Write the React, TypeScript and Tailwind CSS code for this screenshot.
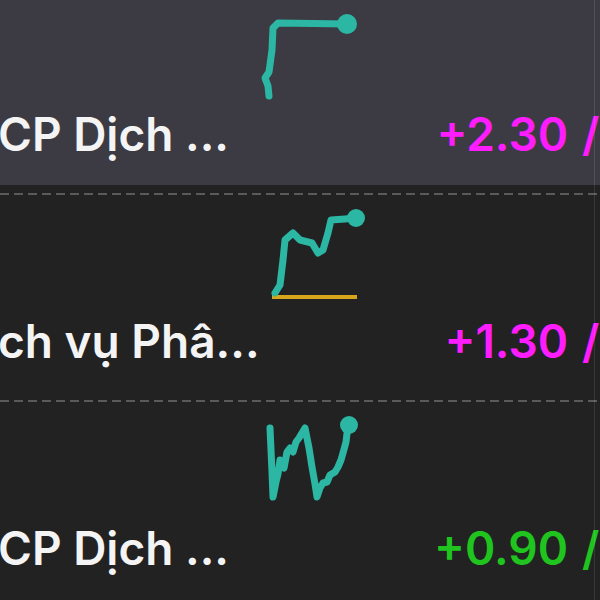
type Row = {
  name: string;
  value: string;
  tail: string;
  valueColor: string;
  active?: boolean;
  line: string;
  dot: [number, number, number];
  base?: [number, number, number];
};

const rows: Row[] = [
  {
    name: 'CP Dịch ...',
    value: '+2.30',
    tail: '/ +3.41%',
    valueColor: 'text-[#ff1cff]',
    active: true,
    line: '9,98 8,88 5,80 9,74 12,52 13,30 18,25 87,26',
    dot: [87, 26, 10],
  },
  {
    name: 'ch vụ Phâ...',
    value: '+1.30',
    tail: '/ +2.10%',
    valueColor: 'text-[#ff1cff]',
    line: '15,88 20,80 23,55 25,35 33,28 40,35 52,38 58,48 63,45 68,28 71,15 85,14 96,13',
    dot: [96, 13, 9],
    base: [12, 97, 92],
  },
  {
    name: 'CP Dịch ...',
    value: '+0.90',
    tail: '/ +1.52%',
    valueColor: 'text-[#1fc41f]',
    line: '10,16 12,60 13,85 16,70 18,62 20,48 24,56 27,40 30,36 33,40 36,30 39,26 45,16 49,36 52,55 55,72 57,85 60,76 63,71 67,70 70,63 75,60 78,55 81,48 83,41 86,30 88,13',
    dot: [89, 13, 9],
  },
];

const Sparkline = ({ row }: { row: Row }) => (
  <svg width="110" height="110" viewBox="0 0 110 110" className="ml-[260px] block overflow-visible">
    {row.base && (
      <line x1={row.base[0]} y1={row.base[2]} x2={row.base[1]} y2={row.base[2]} stroke="#d6a51c" strokeWidth="4" />
    )}
    <polyline
      points={row.line}
      fill="none"
      stroke="#2cb6a4"
      strokeWidth="7"
      strokeLinejoin="round"
      strokeLinecap="round"
    />
    <circle cx={row.dot[0]} cy={row.dot[1]} r={row.dot[2]} fill="#2cb6a4" />
  </svg>
);

export default function App() {
  return (
    <div className="relative h-[600px] w-[600px] overflow-hidden bg-[#222222] font-['Inter','Noto_Sans',sans-serif] text-[#f4f4f4]">
      <div className="-mt-[12px] flex flex-col">
        {rows.map((row, i) => (
          <div key={i} className="flex flex-col">
            <div className={`flex h-[197px] flex-col pt-[10px] ${row.active ? 'bg-[#3c3b43]' : ''}`}>
              <Sparkline row={row} />
              <div className="flex h-[52px] items-center whitespace-nowrap text-[46px] font-semibold leading-[52px]">
                <span className="-ml-[2px] w-[418px] shrink-0">{row.name}</span>
                <span className={`w-[152px] shrink-0 text-right ${row.valueColor}`}>{row.value}</span>
                <span className={`ml-[14px] shrink-0 ${row.valueColor}`}>{row.tail}</span>
              </div>
            </div>
            <div className="h-[8px]" />
            <div className="h-[2px] bg-[repeating-linear-gradient(90deg,#5a5a5a_0_9px,transparent_9px_14px)]" />
          </div>
        ))}
      </div>
      <div className="absolute bottom-0 left-[594px] top-0 w-px bg-white/10" />
    </div>
  );
}
